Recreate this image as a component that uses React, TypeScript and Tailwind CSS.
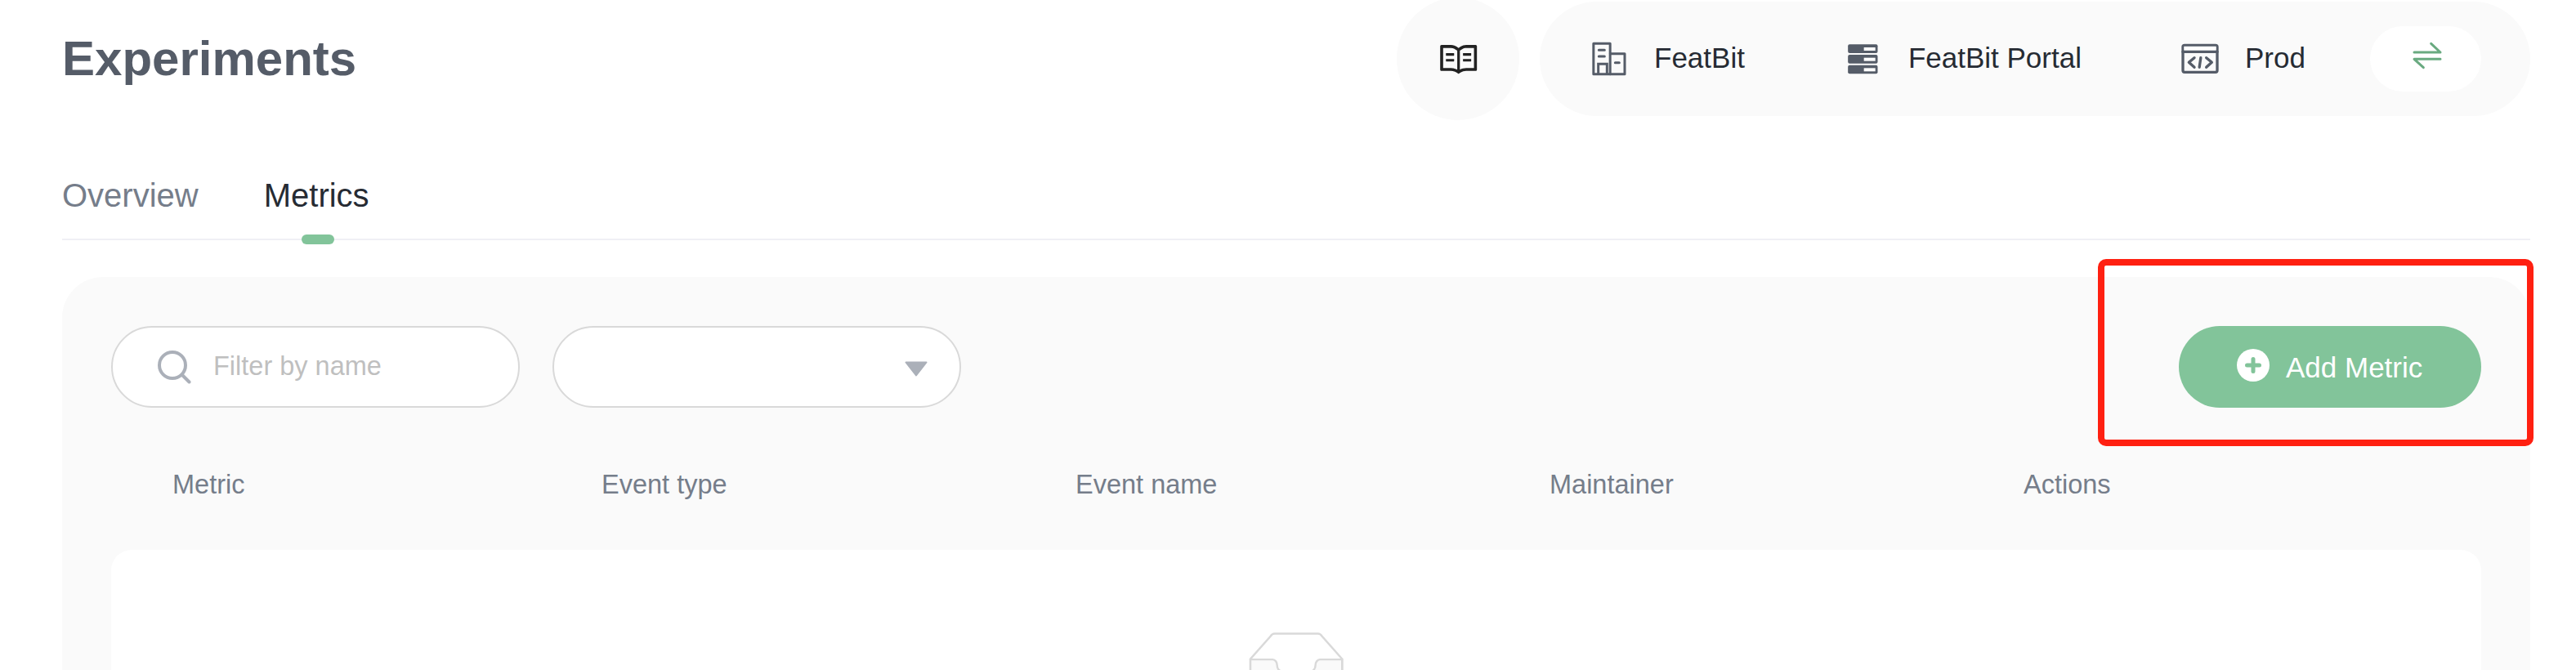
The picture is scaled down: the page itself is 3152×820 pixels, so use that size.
import type { ReactNode } from "react";
import { AiOutlineRead } from "react-icons/ai";

function OrganizationIcon() {
  return (
    <svg width="42" height="42" viewBox="0 0 126 126" fill="none" stroke="#555c68" strokeWidth="9" strokeLinejoin="round" strokeLinecap="round">
      <path d="M5.5 6.5h61v112.5h-61z" />
      <path d="M67 44h53v75H67" />
      <path d="M23 116V82h32v34" strokeLinejoin="miter" />
      <path d="M25 31h21M25 54h21M85 77h15" />
    </svg>
  );
}

function ProjectIcon() {
  return (
    <svg width="37" height="37" viewBox="0 0 111 111">
      {[1, 39, 77].map((y) => (
        <g key={y}>
          <rect x="0.5" y={y} width="109" height="32" rx="6" fill="#555c68" />
          <rect x="59" y={y + 11} width="42" height="12" fill="#fff" />
        </g>
      ))}
    </svg>
  );
}

function EnvironmentIcon() {
  return (
    <svg width="46" height="38" viewBox="0 0 138 114" fill="none" stroke="#555c68" strokeWidth="10" strokeLinejoin="round" strokeLinecap="round">
      <rect x="6" y="7" width="126" height="99" rx="6" fill="#fafafa" />
      <path d="M10 11h118v15H10z" fill="#fff" stroke="none" />
      <path d="M6 31h126" />
      <path d="M48 53L28 70l20 18M92 53l20 17-20 18M71.500 53l-5 35" />
    </svg>
  );
}

function SwitchIcon() {
  return (
    <svg width="36" height="34" viewBox="0 0 108 102" fill="none" stroke="#69aa80" strokeWidth="9" strokeLinejoin="round" strokeLinecap="round">
      <path d="M6 39h96L68 7" />
      <path d="M102 64H6l34 31" />
    </svg>
  );
}

function EmptyBox() {
  return (
    <svg className="shrink-0" width="156.25" height="100" viewBox="0 0 64 41">
      <g transform="translate(0 1)" fill="none" fillRule="evenodd">
        <ellipse fill="#f5f5f5" cx="32" cy="33" rx="32" ry="7" />
        <g stroke="#d9d9d9" fillRule="nonzero">
          <path d="M55 12.76L44.854 1.258C44.367.474 43.656 0 42.907 0H21.093c-.749 0-1.460.474-1.947 1.257L9 12.761V22h46v-9.240z" />
          <path
            d="M41.613 15.931c0-1.605.994-2.930 2.227-2.931H55v18.137C55 33.260 53.680 35 52.050 35h-40.100C10.320 35 9 33.259 9 31.137V13h11.160c1.233 0 2.227 1.323 2.227 2.928v.022c0 1.605 1.005 2.901 2.237 2.901h14.752c1.232 0 2.237-1.308 2.237-2.913v-.007z"
            fill="#fafafa"
          />
        </g>
      </g>
    </svg>
  );
}

function Crumb({ icon, label }: { icon: ReactNode; label: string }) {
  return (
    <div className="flex items-center gap-[30px]">
      <span className="flex w-[50px] justify-center">{icon}</span>
      <span className="pb-[2px] text-[35px] leading-[40px] whitespace-nowrap text-[#262b33]">{label}</span>
    </div>
  );
}

const columns = ["Metric", "Event type", "Event name", "Maintainer", "Actions"];

export default function App() {
  return (
    <div className="relative flex h-[820px] w-[3152px] flex-col overflow-hidden bg-white pr-[56px] pl-[76px] font-['Liberation_Sans',Arial,sans-serif]">
      <header className="flex h-[144px] shrink-0 items-center">
        <h1 className="flex-1 text-[60px] leading-[70px] font-bold text-[#555c68]">Experiments</h1>
        <button className="mr-[25px] flex size-[150px] shrink-0 items-center justify-center rounded-full bg-[#fafafa] pt-[2px] pl-[1px]">
          <AiOutlineRead size={51.4} color="#222222" />
        </button>
        <div className="flex h-[140px] w-[1212px] shrink-0 items-center rounded-[70px] bg-[#fafafa] pr-[60px] pl-[60px]">
          <div className="flex flex-1 gap-[120px]">
            <Crumb icon={<OrganizationIcon />} label="FeatBit" />
            <Crumb icon={<ProjectIcon />} label="FeatBit Portal" />
            <Crumb icon={<EnvironmentIcon />} label="Prod" />
          </div>
          <button className="flex h-[80px] w-[136px] shrink-0 items-center justify-center rounded-[40px] bg-white pb-[8px] pl-[3px]">
            <SwitchIcon />
          </button>
        </div>
      </header>

      <nav className="mt-[64px] flex h-[86px] shrink-0 gap-[80px] border-b-2 border-[#f0f0f5] text-[40px] leading-[62px]">
        <span className="text-[#757d8a]">Overview</span>
        <span className="relative text-[#262b33]">
          Metrics
          <i className="absolute top-[79px] left-[46px] h-[12px] w-[40px] rounded-full bg-[#82c49a]" />
        </span>
      </nav>

      <main className="mt-[45px] flex h-[520px] shrink-0 flex-col rounded-t-[50px] bg-[#fafafa] px-[60px] pt-[60px]">
        <div className="flex items-center">
          <label className="flex h-[100px] w-[500px] items-center rounded-full border-2 border-[#d9d9d9] bg-white pl-[55px]">
            <svg width="41" height="41" viewBox="0 0 41 41" fill="none" stroke="#abb0b9" strokeWidth="4" strokeLinecap="round">
              <circle cx="18" cy="18" r="16" />
              <path d="M30 30l8.500 8.500" />
            </svg>
            <span className="ml-[27px] pb-[3px] text-[32.5px] leading-[40px] text-[#bfbfbf]">Filter by name</span>
          </label>
          <div className="ml-[40px] flex h-[100px] w-[500px] items-center justify-end rounded-full border-2 border-[#d9d9d9] bg-white pt-[5px] pr-[39px]">
            <svg width="28" height="19" viewBox="0 0 28 19">
              <path d="M1.500 1.500h25L14 17.500z" fill="#abb0b9" stroke="#abb0b9" strokeWidth="2" strokeLinejoin="round" />
            </svg>
          </div>
          <button className="ml-auto flex h-[100px] w-[370px] items-center rounded-full bg-[#82c49a] pl-[71px] text-white">
            <svg className="-mt-[4px]" width="40" height="40" viewBox="0 0 40 40">
              <circle cx="20" cy="20" r="20" fill="#fff" />
              <path d="M20 12.500v15M12.500 20h15" stroke="#82c49a" strokeWidth="5" strokeLinecap="round" />
            </svg>
            <span className="ml-[20px] pt-[2px] text-[35px] leading-[40px]">Add Metric</span>
          </button>
        </div>

        <div className="mt-[74px] grid grid-cols-[525px_580px_580px_580px_1fr] pl-[75px] text-[32.5px] leading-[40px] text-[#757d8a]">
          {columns.map((name) => (
            <span key={name}>{name}</span>
          ))}
        </div>

        <div className="mt-[60px] flex h-[200px] shrink-0 justify-center rounded-t-[25px] bg-white pt-[100px]">
          <EmptyBox />
        </div>
      </main>

      <div className="absolute top-[317px] left-[2567px] h-[229px] w-[533px] rounded-[10px] border-8 border-[#ff2011]" />
    </div>
  );
}
